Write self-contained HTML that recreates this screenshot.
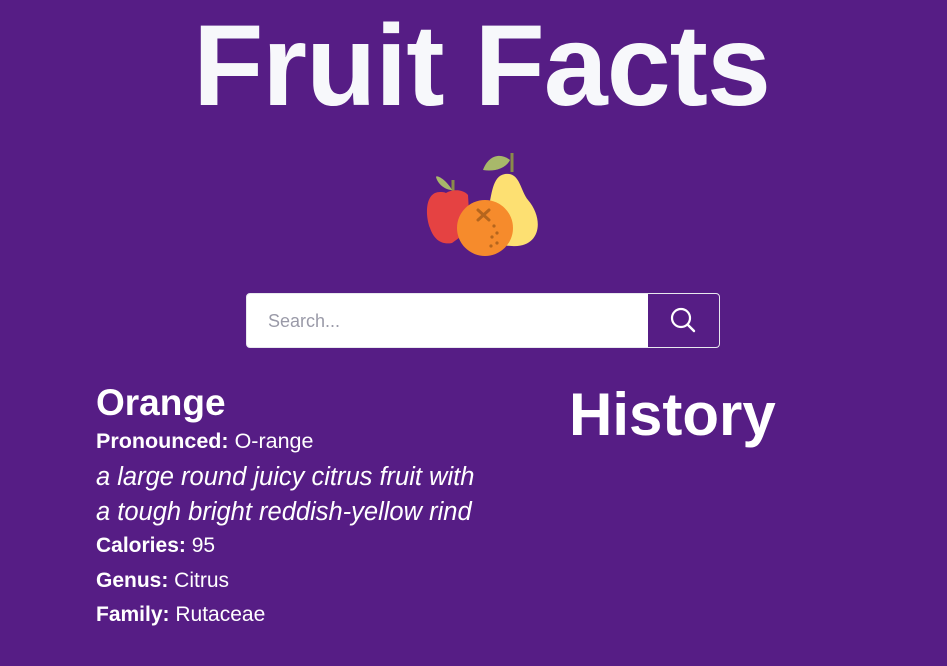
<!DOCTYPE html>
<html><head><meta charset="utf-8"><style>
body{margin:0;width:947px;height:666px;background:#561d85;color:#fff;font-family:"Liberation Sans",sans-serif;position:relative;overflow:hidden}
.a{position:absolute;white-space:nowrap}
h1{position:absolute;left:8px;width:947px;text-align:center;top:0px;margin:0;font-size:115px;font-weight:bold;color:#f7f8fb;letter-spacing:-1px}
.search{position:absolute;left:246px;top:293px;width:472px;height:53px;border:1.5px solid #e8e8ee;border-radius:4px;background:#fff;overflow:hidden}
.search span{position:absolute;left:21px;top:17px;font-size:18px;color:#9a9aa8}
.btn{position:absolute;right:0;top:0;width:71px;height:53px;background:#561d85}
</style></head><body>
<h1>Fruit Facts</h1>
<svg class="a" style="left:410px;top:145px" width="130" height="112" viewBox="410 145 130 112">
<path d="M453 180 L453 200" stroke="#8a8a4a" stroke-width="3"/>
<path d="M452 190 C445 178 436 175 436 177 C438 185 446 190 452 190Z" fill="#a8b86a"/>
<path d="M440 192 C425 192 425 215 430 228 C434 240 442 245 452 243 L470 230 L468 195 C462 188 450 190 446 193 C444 192 442 192 440 192Z" fill="#e54242"/>
<path d="M512 153 L512 172" stroke="#8a8a4a" stroke-width="3"/>
<path d="M510 160 C500 152 488 156 483 170 C495 172 506 168 510 160Z" fill="#a8b86a"/>
<path d="M505 174 C520 172 520 190 528 200 C545 220 540 248 512 246 C490 246 485 230 488 210 C492 195 492 176 505 174Z" fill="#fde072"/>
<circle cx="485" cy="228" r="28" fill="#f68b2c"/>
<path d="M478 210 L489 220 M489 210 L478 220" stroke="#b5651d" stroke-width="3" stroke-linecap="round"/>
<circle cx="494" cy="226" r="1.6" fill="#b5651d"/><circle cx="497" cy="233" r="1.6" fill="#b5651d"/><circle cx="492" cy="237" r="1.6" fill="#b5651d"/><circle cx="497" cy="243" r="1.6" fill="#b5651d"/><circle cx="491" cy="246" r="1.6" fill="#b5651d"/>
</svg>
<div class="search"><span>Search...</span><div class="btn">
<svg width="71" height="53"><circle cx="33" cy="24" r="9" fill="none" stroke="#fff" stroke-width="2.2"/><path d="M39.5 30.5 L46 37" stroke="#fff" stroke-width="2.4" stroke-linecap="round"/></svg></div></div>
<div class="a" style="left:96px;top:382px;font-size:37px;font-weight:bold">Orange</div>
<div class="a" style="left:569px;top:380px;font-size:60px;font-weight:bold">History</div>
<div class="a" style="left:96px;top:429px;font-size:21.5px"><b>Pronounced:</b> O-range</div>
<div class="a" style="left:96px;top:460px;font-size:25.5px;font-style:italic;line-height:35px">a large round juicy citrus fruit with<br>a tough bright reddish-yellow rind</div>
<div class="a" style="left:96px;top:534px;font-size:21px"><b>Calories:</b> 95</div>
<div class="a" style="left:96px;top:569px;font-size:21px"><b>Genus:</b> Citrus</div>
<div class="a" style="left:96px;top:603px;font-size:21px"><b>Family:</b> Rutaceae</div>
</body></html>
